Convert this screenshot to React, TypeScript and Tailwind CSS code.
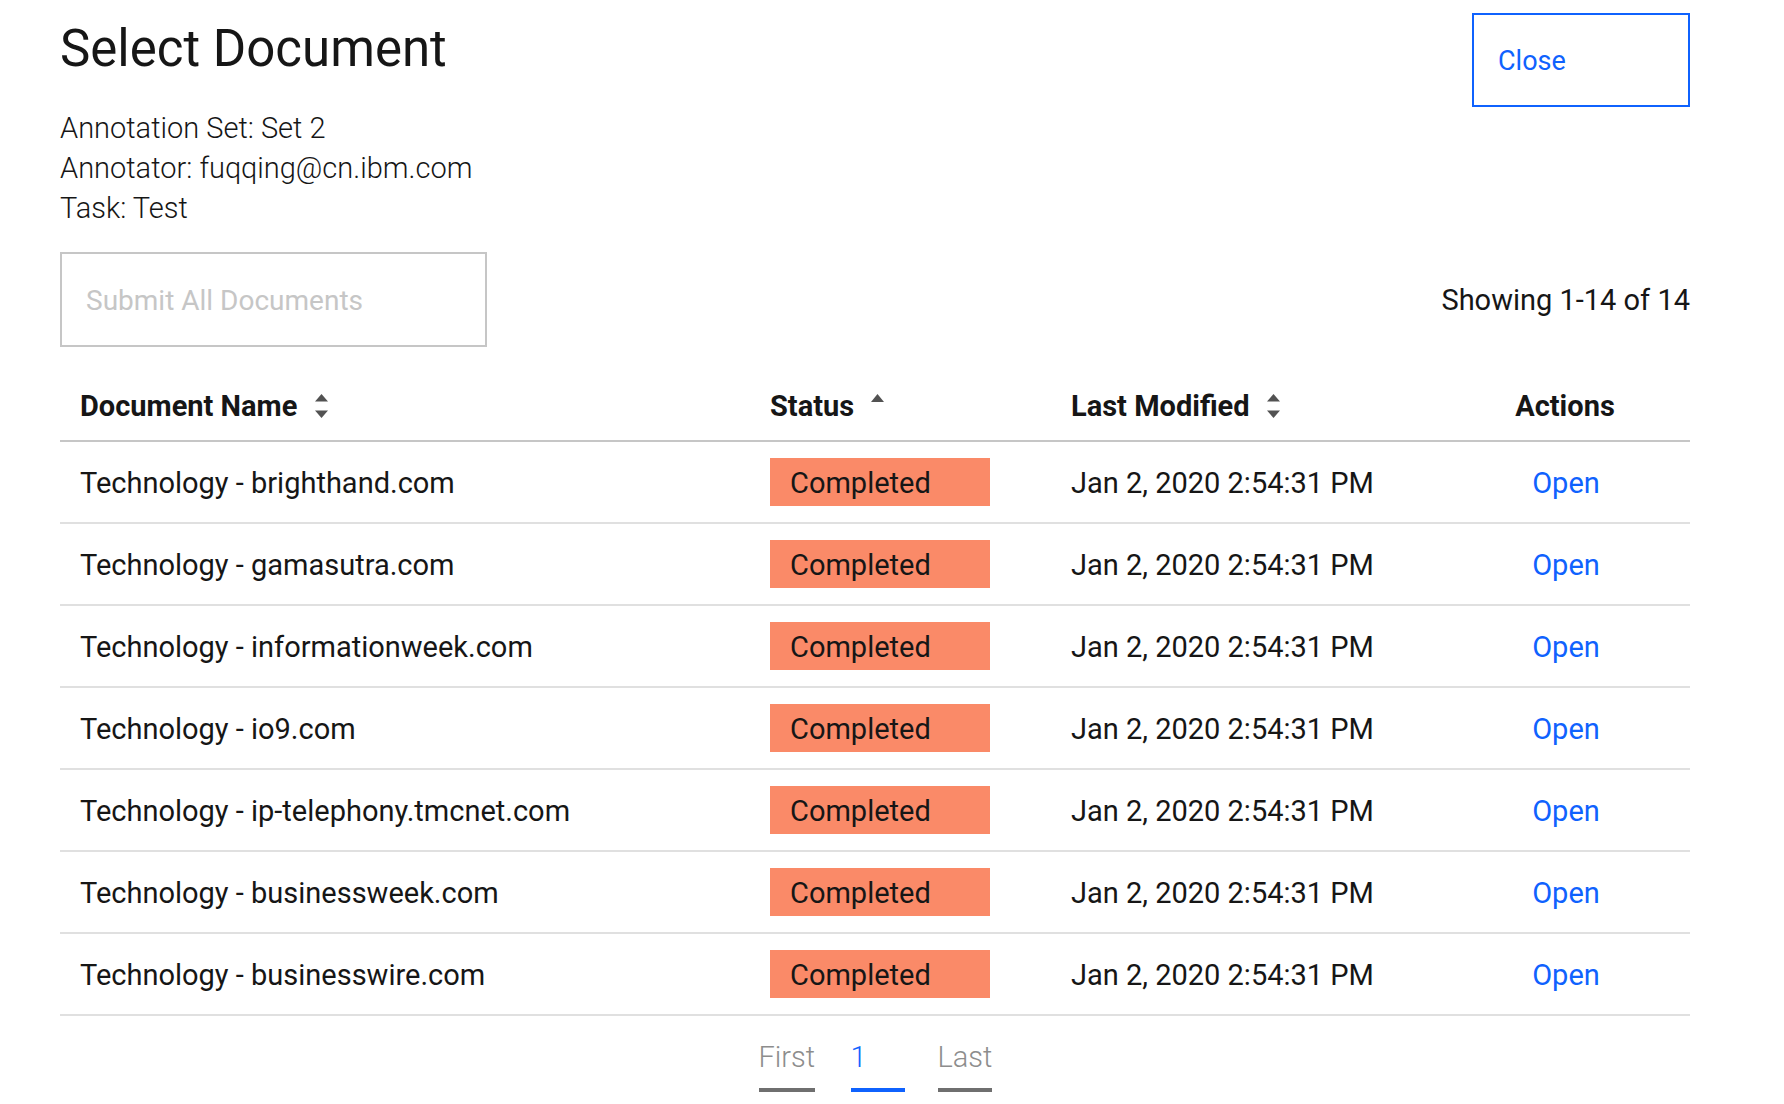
import React from "react";

const rows = [
  "Technology - brighthand.com",
  "Technology - gamasutra.com",
  "Technology - informationweek.com",
  "Technology - io9.com",
  "Technology - ip-telephony.tmcnet.com",
  "Technology - businessweek.com",
  "Technology - businesswire.com",
];

const SortIcon = () => (
  <svg width="13" height="24" viewBox="0 0 13 24" className="shrink-0">
    <polygon points="0,7.5 6.5,0 13,7.5" fill="#525252" />
    <polygon points="0,16.5 6.5,24 13,16.5" fill="#525252" />
  </svg>
);

const UpIcon = () => (
  <svg width="13" height="8" viewBox="0 0 13 8" className="shrink-0 self-start mt-[3px]">
    <polygon points="0,8 6.5,0 13,8" fill="#525252" />
  </svg>
);

const cols = "grid grid-cols-[690px_301px_385px_1fr]";

const App = () => {
  return (
    <div className="min-h-screen w-full bg-white font-[Roboto,sans-serif] text-[#161616] pl-[60px] pr-[94px] pt-[13px]">
      <div className="flex justify-between items-start">
        <div className="flex flex-col">
          <h1 className="mt-[8px] text-[51px] leading-[56px] font-normal">Select Document</h1>
          <div className="mt-[31px] flex flex-col text-[29px] leading-[40px] font-light">
            <p>Annotation Set: Set 2</p>
            <p>Annotator: fuqqing@cn.ibm.com</p>
            <p>Task: Test</p>
          </div>
        </div>
        <button className="w-[218px] h-[94px] border-2 border-[#0f62fe] text-[#0f62fe] text-[27px] text-left pl-[24px] pt-[2px]">
          Close
        </button>
      </div>

      <div className="mt-[24px] flex justify-between items-center">
        <button className="w-[427px] h-[95px] border-2 border-[#c6c6c6] text-[#c6c6c6] text-[28px] text-left pl-[24px] pt-[2px]">
          Submit All Documents
        </button>
        <div className="text-[29px] pt-[2px]">Showing 1-14 of 14</div>
      </div>

      <div className="mt-[44px]">
        <div className={`${cols} items-center pb-[19px] border-b-2 border-[#c6c6c6] text-[29px] leading-[30px] font-bold`}>
          <div className="pl-[20px] flex items-center gap-[18px]">
            <span>Document Name</span>
            <SortIcon />
          </div>
          <div className="pl-[20px] flex items-center gap-[17px]">
            <span>Status</span>
            <UpIcon />
          </div>
          <div className="pl-[20px] flex items-center gap-[17px]">
            <span>Last Modified</span>
            <SortIcon />
          </div>
          <div className="text-center pl-[4px]">Actions</div>
        </div>

        {rows.map((name, i) => (
          <div
            key={i}
            className={`${cols} items-center h-[82px] border-b-2 border-[#e0e0e0] text-[29px]`}
          >
            <div className="pl-[20px] pt-[3px]">{name}</div>
            <div className="pl-[20px]">
              <div className="w-[220px] h-[48px] bg-[#fa8a68] flex items-center pl-[20px] pt-[3px]">Completed</div>
            </div>
            <div className="pl-[20px] pt-[3px]">Jan 2, 2020 2:54:31 PM</div>
            <div className="text-center text-[#0f62fe] pt-[3px] pl-[6px]">Open</div>
          </div>
        ))}

        <div className="flex justify-center pt-[26px] text-[29px] leading-[30px] font-light">
          <div className="flex">
            <div className="flex flex-col w-[56px] text-[#8d8d8d]">
              <span>First</span>
              <span className="mt-[16px] h-[4px] bg-[#6f6f6f]" />
            </div>
            <div className="flex flex-col w-[54px] ml-[36px] text-[#0f62fe]">
              <span>1</span>
              <span className="mt-[16px] h-[4px] bg-[#0f62fe]" />
            </div>
            <div className="flex flex-col w-[54px] ml-[33px] text-[#8d8d8d]">
              <span>Last</span>
              <span className="mt-[16px] h-[4px] bg-[#6f6f6f]" />
            </div>
          </div>
        </div>
      </div>
    </div>
  );
};

export default App;
